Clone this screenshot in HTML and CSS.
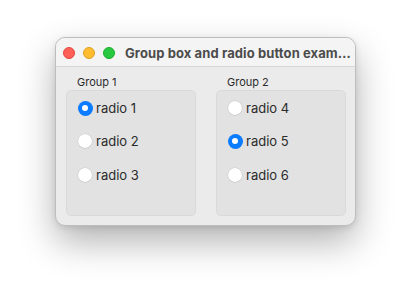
FILE: index.html
```html
<!DOCTYPE html>
<html>
<head>
<meta charset="utf-8">
<link rel="stylesheet" href="styles.css">
</head>
<body>
<div class="stage">
  <div class="window">
    <div class="titlebar">
      <div class="lights">
        <span class="light red"></span>
        <span class="light yellow"></span>
        <span class="light green"></span>
      </div>
      <div class="title">Group box and radio button exam…</div>
    </div>
    <div class="content">
      <div class="group">
        <div class="group-label">Group 1</div>
        <div class="group-box">
          <div class="radio"><span class="dot on"></span><span class="label">radio 1</span></div>
          <div class="radio"><span class="dot"></span><span class="label">radio 2</span></div>
          <div class="radio"><span class="dot"></span><span class="label">radio 3</span></div>
        </div>
      </div>
      <div class="group">
        <div class="group-label">Group 2</div>
        <div class="group-box">
          <div class="radio"><span class="dot"></span><span class="label">radio 4</span></div>
          <div class="radio"><span class="dot on"></span><span class="label">radio 5</span></div>
          <div class="radio"><span class="dot"></span><span class="label">radio 6</span></div>
        </div>
      </div>
    </div>
  </div>
</div>
</body>
</html>
```
FILE: styles.css
```css
html, body {
  margin: 0;
  padding: 0;
  background: #ffffff;
  min-height: 300px;
}
body {
  font-family: Inter, "Noto Sans", "Liberation Sans", sans-serif;
  color: #2b2b2b;
}
.stage {
  display: flex;
  justify-content: center;
  padding-top: 37px;
  padding-right: 1px;
  min-height: 263px;
}
.window {
  width: 299px;
  height: 187px;
  border: 1px solid #bdbdbd;
  border-radius: 10px;
  background: #ebebeb;
  overflow: hidden;
  box-shadow: 0 16px 36px rgba(0, 0, 0, 0.3), 0 2px 6px rgba(0, 0, 0, 0.1);
  display: flex;
  flex-direction: column;
}
.titlebar {
  flex: none;
  background: #f4f4f4;
  border-bottom: 1px solid #d6d6d6;
  display: flex;
  align-items: center;
  box-sizing: border-box;
  height: 29px;
}
.lights {
  display: flex;
  gap: 8px;
  padding-left: 7px;
  padding-top: 1px;
}
.light {
  width: 12px;
  height: 12px;
  border-radius: 50%;
  box-sizing: border-box;
}
.red { background: #fe5f57; border: 0.5px solid #e14640; }
.yellow { background: #febc2e; border: 0.5px solid #dfa023; }
.green { background: #28c840; border: 0.5px solid #1aab29; }
.title {
  margin-left: 10px;
  font-size: 13px;
  font-weight: 700;
  color: #4c4c4c;
  white-space: nowrap;
  overflow: hidden;
  padding-top: 1px;
  letter-spacing: 0.1px;
}
.content {
  flex: 1;
  display: flex;
  gap: 20px;
  padding: 9px 9px 9px 10px;
}
.group {
  flex: 1;
  display: flex;
  flex-direction: column;
}
.group-label {
  font-size: 11px;
  line-height: 13px;
  padding-left: 11px;
  color: #2b2b2b;
  margin-bottom: 1px;
}
.group-box {
  flex: 1;
  background: #e2e2e2;
  border: 1px solid #d9d9d9;
  border-radius: 5px;
  padding: 7px 11px 0 11px;
  display: flex;
  flex-direction: column;
  gap: 13.3px;
}
.radio {
  height: 20px;
  display: flex;
  align-items: center;
  gap: 4px;
}
.dot {
  width: 14px;
  height: 14px;
  border-radius: 50%;
  background: #ffffff;
  box-shadow: 0 0 0 0.5px rgba(0, 0, 0, 0.12), 0 0.5px 1px rgba(0, 0, 0, 0.08);
  box-sizing: border-box;
  display: flex;
  align-items: center;
  justify-content: center;
  flex: none;
}
.dot.on {
  width: 15px;
  height: 15px;
  margin-left: -0.5px;
  margin-right: -0.5px;
  background: #0b7bff;
  box-shadow: none;
}
.dot.on::after {
  content: "";
  width: 6px;
  height: 6px;
  border-radius: 50%;
  background: #ffffff;
}
.label {
  font-size: 13px;
  color: #2b2b2b;
}
```
